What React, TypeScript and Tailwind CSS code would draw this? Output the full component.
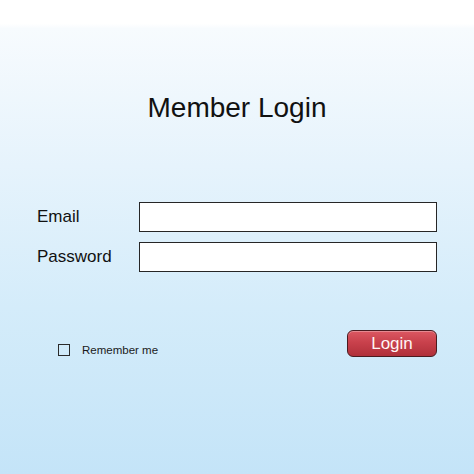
export default function App() {
  return (
    <div
      className="w-[474px] h-[474px] flex flex-col bg-[linear-gradient(to_bottom,#ffffff_0%,#ffffff_5%,#f7fbfe_6%,#e6f3fc_35%,#d4ecfa_65%,#c4e4f8_100%)] text-[#111]"
      style={{ fontFamily: '"Liberation Sans", Arial, sans-serif' }}
    >
      <h1 className="pt-[92px] text-center text-[28px] leading-[32px] font-normal">Member Login</h1>

      <div className="mt-[78px] flex flex-col gap-[10px] pl-[37px]">
        <div className="flex items-center">
          <label className="w-[102px] text-[17px] leading-[20px]">Email</label>
          <div className="w-[298px] h-[30px] bg-white border-[1.5px] border-[#262626]" />
        </div>
        <div className="flex items-center">
          <label className="w-[102px] text-[17px] leading-[20px]">Password</label>
          <div className="w-[298px] h-[30px] bg-white border-[1.5px] border-[#262626]" />
        </div>
      </div>

      <div className="mt-[58px] flex items-start justify-between pl-[58px] pr-[37px]">
        <div className="mt-[14px] flex items-center gap-[12px]">
          <div className="w-[12px] h-[12px] border-[1.5px] border-[#2a2a2a] bg-transparent" />
          <span className="text-[11.5px] leading-[12px] text-[#1a1a1a]">Remember me</span>
        </div>
        <button className="w-[90px] h-[27px] rounded-[6px] border-[1.5px] border-[#4a1b20] bg-[linear-gradient(to_bottom,#dc5862_0%,#c9414c_45%,#b0303a_100%)] text-[#fff5f5] text-[17px] leading-[20px] shadow-[inset_0_1px_0_rgba(255,255,255,0.3)]">
          Login
        </button>
      </div>
    </div>
  );
}
